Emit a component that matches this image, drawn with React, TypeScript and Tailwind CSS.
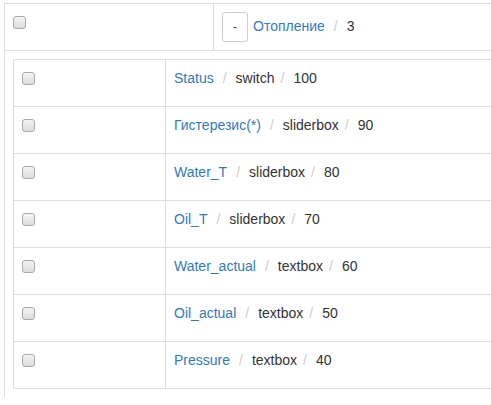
import React from 'react';

const rows = [
  { name: 'Status', type: 'switch', order: 100 },
  { name: 'Гистерезис(*)', type: 'sliderbox', order: 90 },
  { name: 'Water_T', type: 'sliderbox', order: 80 },
  { name: 'Oil_T', type: 'sliderbox', order: 70 },
  { name: 'Water_actual', type: 'textbox', order: 60 },
  { name: 'Oil_actual', type: 'textbox', order: 50 },
  { name: 'Pressure', type: 'textbox', order: 40 },
];

const Check = () => (
  <div className="mt-[4px] w-[13px] h-[13px] rounded-[3px] border border-[#a9a9a9] bg-gradient-to-b from-[#f3f3f3] to-[#dcdcdc]" />
);

const Slash = ({ left = 9 }: { left?: number }) => (
  <span className={`text-[#ccc] mr-[9px] ${left === 9 ? 'ml-[9px]' : 'ml-[6px]'}`}>/</span>
);

const App: React.FC = () => {
  return (
    <div className="w-[491px] h-[405px] overflow-hidden bg-white font-['Liberation_Sans',Arial,sans-serif] text-[14px] leading-[20px] text-[#333]">
      <div className="ml-[4px] mt-[3px] w-[600px] border-t border-l border-[#ddd]">
        {/* group row */}
        <div className="flex h-[47px] border-b border-[#ddd]">
          <div className="w-[209px] shrink-0 border-r border-[#ddd] p-2">
            <Check />
          </div>
          <div className="p-2 flex items-baseline">
            <button className="h-[30px] px-[10px] text-[12px] leading-[18px] border border-[#ccc] rounded-[3px] bg-white text-[#333]">
              -
            </button>
            <a className="ml-[5px] text-[#337ab7]">Отопление</a>
            <Slash />
            <span>3</span>
          </div>
        </div>

        {/* children */}
        <div className="p-2">
          <div className="w-[600px] border-t border-l border-[#ddd]">
            {rows.map((r) => (
              <div key={r.name} className="flex h-[47px] border-b border-[#ddd]">
                <div className="w-[152px] shrink-0 border-r border-[#ddd] p-2">
                  <Check />
                </div>
                <div className="p-2 flex items-baseline">
                  <a className="text-[#337ab7]">{r.name}</a>
                  <Slash />
                  <span>{r.type}</span>
                  <Slash left={6} />
                  <span>{r.order}</span>
                </div>
              </div>
            ))}
          </div>
        </div>
      </div>
    </div>
  );
};

export default App;
